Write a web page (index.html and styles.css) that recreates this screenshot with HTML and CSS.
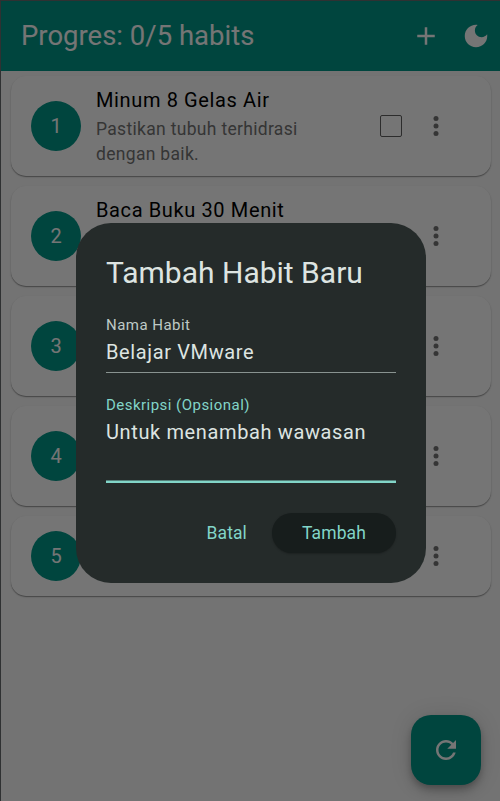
FILE: index.html
```html
<!DOCTYPE html>
<html lang="id">
<head>
<meta charset="utf-8">
<title>Habits</title>
<link rel="stylesheet" href="styles.css">
</head>
<body>
<div class="app">
  <header class="bar">
    <h1 class="bar-title">Progres: 0/5 habits</h1>
    <div class="action"><svg class="icon" viewBox="0 0 24 24"><path d="M19 13h-6v6h-2v-6H5v-2h6V5h2v6h6z"/></svg></div>
    <div class="action"><svg class="icon" viewBox="0 0 24 24"><path d="M12 3c-4.97 0-9 4.03-9 9s4.03 9 9 9 9-4.03 9-9c0-.46-.04-.92-.1-1.36-.98 1.37-2.58 2.26-4.4 2.26-2.98 0-5.4-2.42-5.4-5.4 0-1.81.89-3.42 2.26-4.4-.44-.06-.9-.1-1.36-.1z"/></svg></div>
  </header>
  <main class="list">
    <article class="card">
      <div class="num">1</div>
      <div class="info"><div class="name">Minum 8 Gelas Air</div><div class="desc">Pastikan tubuh terhidrasi dengan baik.</div></div>
      <div class="check"></div>
      <svg class="icon more" viewBox="0 0 24 24"><circle cx="12" cy="6" r="2"/><circle cx="12" cy="12" r="2"/><circle cx="12" cy="18" r="2"/></svg>
    </article>
    <article class="card">
      <div class="num">2</div>
      <div class="info"><div class="name">Baca Buku 30 Menit</div><div class="desc"></div></div>
      <div class="check"></div>
      <svg class="icon more" viewBox="0 0 24 24"><circle cx="12" cy="6" r="2"/><circle cx="12" cy="12" r="2"/><circle cx="12" cy="18" r="2"/></svg>
    </article>
    <article class="card">
      <div class="num">3</div>
      <div class="info"></div>
      <div class="check"></div>
      <svg class="icon more" viewBox="0 0 24 24"><circle cx="12" cy="6" r="2"/><circle cx="12" cy="12" r="2"/><circle cx="12" cy="18" r="2"/></svg>
    </article>
    <article class="card">
      <div class="num">4</div>
      <div class="info"></div>
      <div class="check"></div>
      <svg class="icon more" viewBox="0 0 24 24"><circle cx="12" cy="6" r="2"/><circle cx="12" cy="12" r="2"/><circle cx="12" cy="18" r="2"/></svg>
    </article>
    <article class="card short">
      <div class="num">5</div>
      <div class="info"><div class="desc single">Kurangi kopi.</div></div>
      <div class="check"></div>
      <svg class="icon more" viewBox="0 0 24 24"><circle cx="12" cy="6" r="2"/><circle cx="12" cy="12" r="2"/><circle cx="12" cy="18" r="2"/></svg>
    </article>
  </main>
  <div class="fab"><svg class="icon" viewBox="0 0 24 24"><path d="M17.65 6.35C16.2 4.9 14.21 4 12 4c-4.42 0-7.99 3.58-7.99 8s3.57 8 7.99 8c3.73 0 6.84-2.55 7.73-6h-2.08c-.82 2.33-3.04 4-5.65 4-3.31 0-6-2.69-6-6s2.69-6 6-6c1.66 0 3.14.69 4.22 1.78L13 11h7V4l-2.35 2.35z"/></svg></div>
</div>
<div class="scrim">
  <section class="dialog">
    <h2 class="dialog-title">Tambah Habit Baru</h2>
    <div class="field">
      <div class="label">Nama Habit</div>
      <div class="value">Belajar VMware</div>
    </div>
    <div class="field area">
      <div class="label">Deskripsi (Opsional)</div>
      <div class="value">Untuk menambah wawasan</div>
    </div>
    <div class="buttons">
      <div class="btn">Batal</div>
      <div class="btn raised">Tambah</div>
    </div>
  </section>
</div>
</body>
</html>
```
FILE: styles.css
```css
* { box-sizing: border-box; }
body {
  margin: 0;
  height: 801px;
  overflow: hidden;
  position: relative;
  background: #2f3132;
  font-family: Roboto, "Liberation Sans", sans-serif;
}
h1, h2 { margin: 0; font-weight: 400; }
.app {
  width: 500px;
  height: 800px;
  margin: 1px 0 0 1px;
  background: #fafafa;
}
.icon { width: 30px; height: 30px; fill: currentColor; display: block; }
.bar {
  height: 70px;
  padding-left: 20px;
  display: flex;
  align-items: center;
  background: #009688;
  color: #fff;
}
.bar-title { flex: 1; font-size: 27.5px; line-height: 35px; padding-bottom: 2px; }
.action { width: 50px; display: flex; justify-content: center; }
.list {
  padding: 5px 10px;
  display: flex;
  flex-direction: column;
  gap: 10px;
}
.card {
  height: 100px;
  padding: 0 40px 0 20px;
  display: flex;
  align-items: center;
  border-radius: 15px;
  background: #fff;
  box-shadow: 0 1px 1px rgba(0,0,0,.3), 0 1px 2px rgba(0,0,0,.14);
}
.short { height: 80px; }
.num {
  width: 50px;
  height: 50px;
  border-radius: 50%;
  background: #009688;
  color: #fff;
  font-size: 20px;
  line-height: 50px;
  text-align: center;
}
.info { width: 250px; margin-left: 15px; }
.name { font-size: 20px; line-height: 28px; padding-bottom: 3px; letter-spacing: .625px; color: #000; }
.desc { min-height: 50px; font-size: 17.5px; line-height: 25px; letter-spacing: .3125px; color: #757575; }
.single { min-height: 25px; padding-top: 33px; }
.check {
  width: 22px;
  height: 22px;
  margin-left: 34px;
  flex: none;
  border: 1.5px solid #616161;
  border-radius: 2px;
}
.more { margin-left: 19px; flex: none; color: #757575; }
.fab {
  position: absolute;
  right: 19px;
  bottom: 16px;
  width: 70px;
  height: 70px;
  display: flex;
  align-items: center;
  justify-content: center;
  border-radius: 20px;
  background: #009688;
  color: #fff;
  box-shadow: 0 4px 6px -1px rgba(0,0,0,.2), 0 7px 12px rgba(0,0,0,.14), 0 1px 22px rgba(0,0,0,.12);
}
.scrim {
  position: absolute;
  inset: 1px 0 0 1px;
  padding: 222px 0 0 75px;
  background: rgba(0,0,0,.54);
}
.dialog {
  width: 350px;
  height: 360px;
  padding: 30px;
  border-radius: 35px;
  background: #252b2a;
  color: #dde4e1;
}
.dialog-title { font-size: 30px; line-height: 40px; margin-bottom: 20px; }
.field { height: 60px; margin-bottom: 20px; border-bottom: 1px solid #899390; }
.label { font-size: 15px; line-height: 25px; letter-spacing: .47px; color: #bec9c5; }
.value { font-size: 20px; line-height: 28px; letter-spacing: .625px; }
.area {
  height: 90px;
  margin-bottom: 30px;
  border-bottom: 2px solid #82d5c8;
  box-shadow: inset 0 -1px #54807a;
}
.area .label { color: #82d5c8; }
.buttons { display: flex; justify-content: flex-end; gap: 10px; }
.btn {
  height: 40px;
  padding: 0 15px;
  border-radius: 20px;
  color: #82d5c8;
  font-size: 17.5px;
  line-height: 40px;
  font-weight: 450;
  letter-spacing: .125px;
}
.raised { width: 124px; padding: 0; text-align: center; background: #171d1c; box-shadow: 0 1px 2px rgba(0,0,0,.25); }
```
